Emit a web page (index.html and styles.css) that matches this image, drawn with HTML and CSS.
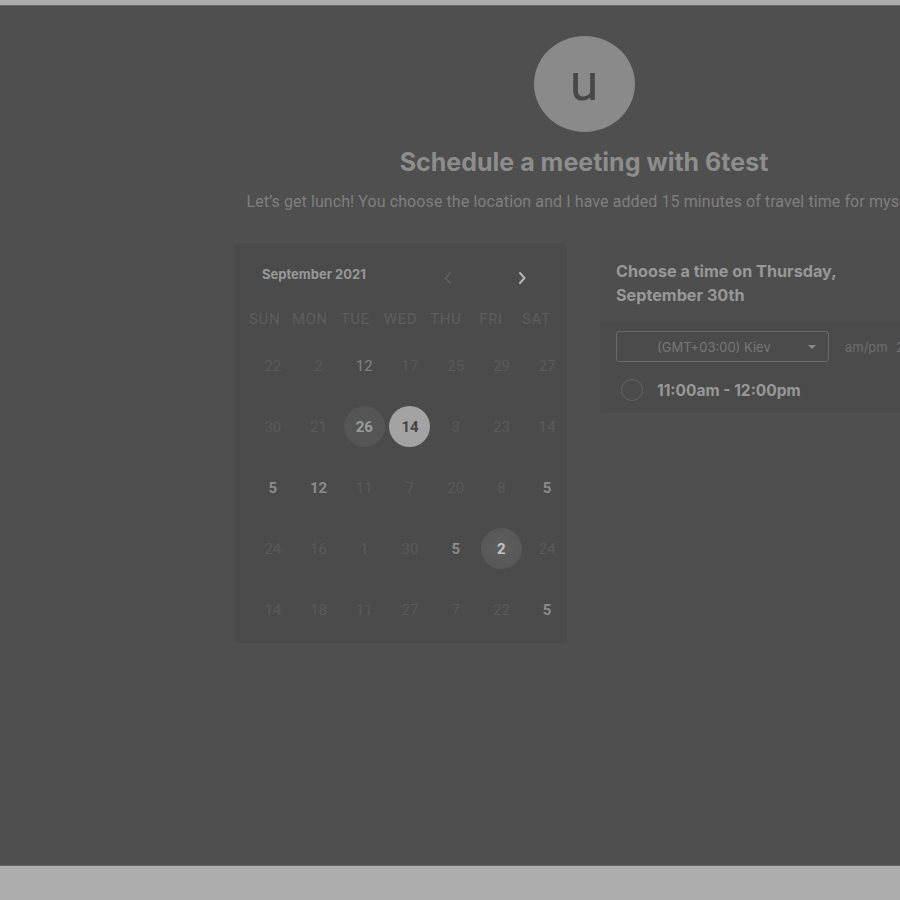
FILE: index.html
```html
<!DOCTYPE html>
<html lang="en">
<head>
<meta charset="utf-8">
<title>Schedule a meeting</title>
<link rel="stylesheet" href="styles.css">
</head>
<body>
<div class="frame">
  <div class="main">
    <div class="avatar"><span>u</span></div>
    <h1 class="title">Schedule a meeting with 6test</h1>
    <p class="subtitle">Let’s get lunch! You choose the location and I have added 15 minutes of travel time for myself.</p>

    <div class="columns">
      <div class="calendar">
        <div class="cal-head">
          <span class="month">September 2021</span>
          <button class="nav prev" aria-label="Previous month">
            <svg width="10" height="14" viewBox="0 0 10 14"><polyline points="7,2 2.5,7 7,12" fill="none" stroke="currentColor" stroke-width="1.8" stroke-linecap="round" stroke-linejoin="round"/></svg>
          </button>
          <button class="nav next" aria-label="Next month">
            <svg width="10" height="14" viewBox="0 0 10 14"><polyline points="3,2 7.5,7 3,12" fill="none" stroke="currentColor" stroke-width="2" stroke-linecap="round" stroke-linejoin="round"/></svg>
          </button>
        </div>
        <div class="weekdays">
          <span>SUN</span><span>MON</span><span>TUE</span><span>WED</span><span>THU</span><span>FRI</span><span>SAT</span>
        </div>
        <div class="days">
          <span class="d">22</span><span class="d">2</span><span class="d mid">12</span><span class="d">17</span><span class="d">25</span><span class="d">29</span><span class="d">27</span>
          <span class="d">30</span><span class="d">21</span><span class="d on"><b class="dot dark">26</b></span><span class="d on"><b class="dot light">14</b></span><span class="d">3</span><span class="d">23</span><span class="d">14</span>
          <span class="d on">5</span><span class="d on">12</span><span class="d">11</span><span class="d">7</span><span class="d">20</span><span class="d">8</span><span class="d on">5</span>
          <span class="d">24</span><span class="d">16</span><span class="d">1</span><span class="d">30</span><span class="d on">5</span><span class="d on"><b class="dot sel">2</b></span><span class="d">24</span>
          <span class="d">14</span><span class="d">18</span><span class="d">11</span><span class="d">27</span><span class="d">7</span><span class="d">22</span><span class="d on">5</span>
        </div>
      </div>

      <div class="times">
        <div class="times-head">Choose a time on Thursday,<br>September 30th</div>
        <div class="times-body">
          <div class="controls">
            <div class="select">
              <span>(GMT+03:00) Kiev</span>
              <i class="caret"></i>
            </div>
            <span class="fmt">am/pm</span>
            <span class="fmt">24h</span>
          </div>
          <label class="slot">
            <span class="radio"></span>
            <span class="slot-text">11:00am - 12:00pm</span>
          </label>
        </div>
      </div>
    </div>
  </div>
</div>
</body>
</html>
```

FILE: styles.css
```css
html, body {
  margin: 0;
  padding: 0;
  background: #adadad;
  overflow: hidden;
}

body {
  height: 900px;
  font-family: Roboto, "Liberation Sans", sans-serif;
}

.frame {
  margin-top: 5px;
  height: 859px;
  background: #4f4f4f;
  border-top: 1px solid #666666;
  border-bottom: 1px solid #666666;
  overflow: hidden;
}

.main {
  width: 700px;
  margin-left: 234px;
  padding-top: 30px;
  display: flex;
  flex-direction: column;
  align-items: center;
}

.avatar {
  width: 101px;
  height: 96px;
  border-radius: 50%;
  background: #8a8a8a;
  display: flex;
  align-items: center;
  justify-content: center;
}

.avatar span {
  font-family: Roboto, sans-serif;
  font-size: 52px;
  line-height: 1;
  color: #484848;
  margin-top: -3px;
}

.title {
  margin: 14px 0 0;
  font-family: Inter, sans-serif;
  font-weight: 700;
  font-size: 25px;
  line-height: 32px;
  color: #8d8d8d;
  white-space: nowrap;
}

.subtitle {
  margin: 12px 0 0;
  font-family: Roboto, sans-serif;
  font-size: 16px;
  letter-spacing: 0.09px;
  line-height: 24px;
  color: #7f7f7f;
  white-space: nowrap;
}

.columns {
  margin-top: 29px;
  width: 700px;
  display: flex;
  gap: 33px;
  align-items: flex-start;
}

.calendar {
  width: 333px;
  flex: none;
  box-sizing: border-box;
  padding: 17px 8px 3px;
  background: #4b4b4b;
  border-radius: 4px;
}

.cal-head {
  height: 28px;
  display: flex;
  align-items: center;
  padding-left: 20px;
  padding-right: 22px;
}

.month {
  flex: 1;
  font-family: Inter, sans-serif;
  font-weight: 700;
  font-size: 13px;
  color: #989898;
}

.nav {
  width: 30px;
  height: 28px;
  border: 0;
  padding: 0;
  background: none;
  display: flex;
  align-items: center;
  justify-content: center;
  margin-top: 8px;
}

.nav.prev { color: #5e5e5e; margin-right: 44px; }
.nav.next { color: #b4b4b4; }

.weekdays {
  margin-top: 14px;
  height: 33px;
  display: grid;
  grid-template-columns: repeat(7, 1fr);
  align-items: center;
  text-align: center;
  font-size: 15px;
  letter-spacing: 0.6px;
  color: #5e5e5e;
}

.days {
  width: 320px;
  margin-left: 8px;
  display: grid;
  grid-template-columns: repeat(7, 1fr);
  grid-auto-rows: 61px;
}

.d {
  display: flex;
  align-items: center;
  justify-content: center;
  font-size: 15px;
  color: #5a5a5a;
}

.d.mid { color: #828282; }
.d.on { color: #8c8c8c; font-weight: 700; }

.dot {
  width: 41px;
  height: 41px;
  border-radius: 50%;
  display: flex;
  align-items: center;
  justify-content: center;
  font-weight: 700;
}

.dot.dark { background: #555555; color: #9a9a9a; }
.dot.light { background: #a3a3a3; color: #454545; }
.dot.sel {
  background: radial-gradient(circle, #5e5e5e 0%, #585858 70%, #535353 100%);
  color: #c2c2c2;
}

.times {
  width: 333px;
  flex: none;
  background: #4b4b4b;
  border-radius: 4px;
  overflow: hidden;
}

.times-head {
  padding: 16px 16px 15px;
  background: #4e4e4e;
  border-bottom: 1px solid #4a4a4a;
  font-family: Inter, sans-serif;
  font-weight: 700;
  font-size: 16.2px;
  line-height: 24px;
  color: #989898;
}

.times-body {
  padding: 8px 16px 4px;
}

.controls {
  display: flex;
  align-items: center;
  gap: 8px;
}

.select {
  flex: none;
  width: 213px;
  height: 31px;
  box-sizing: border-box;
  border: 1px solid #6a6a6a;
  border-radius: 3px;
  display: flex;
  align-items: center;
  padding-left: 40px;
  padding-right: 12px;
  font-family: Inter, sans-serif;
  font-size: 13px;
  color: #787878;
  margin-right: 8px;
}

.select span { flex: 1; }

.caret {
  width: 0;
  height: 0;
  border-left: 4px solid transparent;
  border-right: 4px solid transparent;
  border-top: 4px solid #8a8a8a;
}

.fmt {
  flex: none;
  font-family: Inter, sans-serif;
  font-size: 13px;
  color: #6e6e6e;
}

.slot {
  height: 38px;
  margin-top: 9px;
  display: flex;
  align-items: center;
  gap: 14px;
}

.radio {
  width: 20px;
  height: 20px;
  border: 1.5px solid #666666;
  border-radius: 50%;
  margin-left: 5px;
}

.slot-text {
  font-family: Inter, sans-serif;
  font-weight: 700;
  font-size: 15.5px;
  color: #989898;
}
```
